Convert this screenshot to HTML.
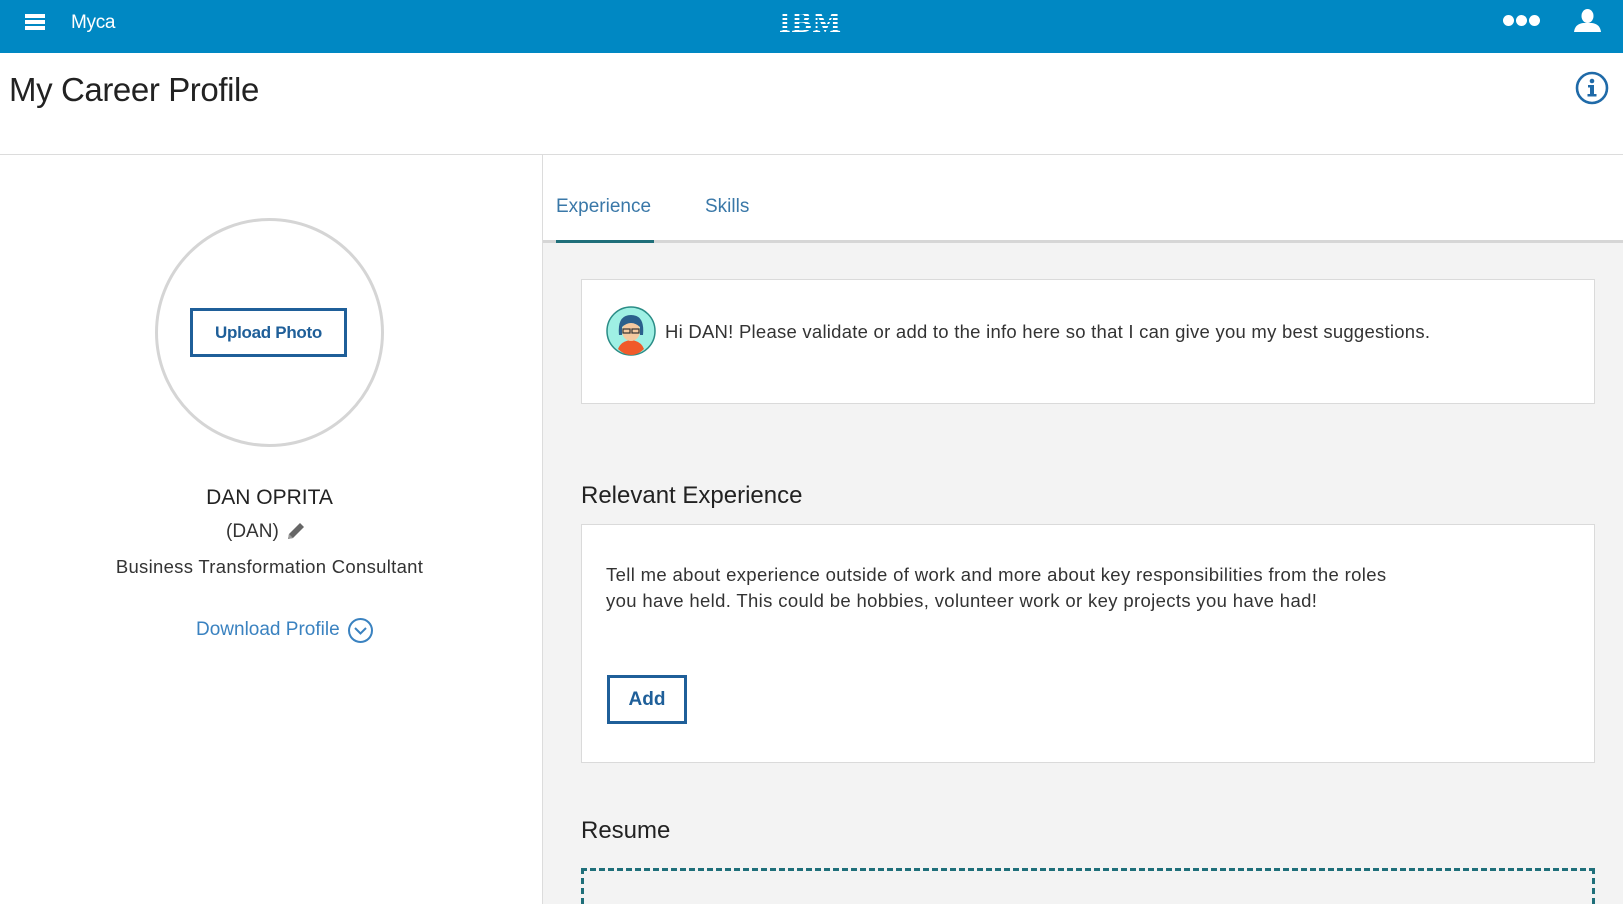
<!DOCTYPE html>
<html><head><meta charset="utf-8"><style>
*{margin:0;padding:0;box-sizing:border-box}
html,body{width:1623px;height:904px;overflow:hidden}
body{font-family:"Liberation Sans",Arial,sans-serif;background:#fff;color:#222}
#wrap{position:relative;width:1623px;height:904px;overflow:hidden}
.abs{position:absolute}
#hdr{left:0;top:0;width:1623px;height:53px;background:#0088c3}
.card{background:#fff;border:1px solid #dadada;position:absolute}
</style></head><body><div id="wrap">
<div id="hdr" class="abs">
  <div class="abs" style="left:25px;top:14px;width:20px;height:4px;background:#fff"></div>
  <div class="abs" style="left:25px;top:20px;width:20px;height:4px;background:#fff"></div>
  <div class="abs" style="left:25px;top:26px;width:20px;height:4px;background:#fff"></div>
  <div class="abs" style="left:71px;top:12px;color:#fff;font-size:19px;letter-spacing:-0.3px">Myca</div>
  <div class="abs" style="left:779px;top:6px;color:#fff;font-size:30px;font-weight:bold;font-family:'Liberation Serif',serif;letter-spacing:1px">IBM</div>
  <div class="abs" style="left:775px;top:12px;width:80px;height:30px;background:repeating-linear-gradient(#0088c3 0 2px,transparent 2px 4px)"></div>
  <div class="abs" style="left:1503px;top:15px;width:11px;height:11px;border-radius:50%;background:#fff"></div>
  <div class="abs" style="left:1516px;top:15px;width:11px;height:11px;border-radius:50%;background:#fff"></div>
  <div class="abs" style="left:1529px;top:15px;width:11px;height:11px;border-radius:50%;background:#fff"></div>
  <svg class="abs" style="left:1574px;top:9px" width="27" height="23" viewBox="0 0 27 23"><ellipse cx="13.5" cy="7" rx="6" ry="7" fill="#fff"/><path d="M0 23 Q1 15 9 14 L18 14 Q26 15 27 23Z" fill="#fff"/></svg>
</div>
<div class="abs" style="left:9px;top:71px;font-size:33px;color:#222;letter-spacing:-0.4px">My Career Profile</div>
<svg class="abs" style="left:1575px;top:71px" width="34" height="34" viewBox="0 0 34 34"><circle cx="17" cy="17" r="15" fill="none" stroke="#1f6aa8" stroke-width="2.6"/><circle cx="17" cy="10" r="2.3" fill="#1f6aa8"/><path d="M13 14h6v9h2.5v2.5h-9V23H15v-6.5h-2z" fill="#1f6aa8"/></svg>
<div class="abs" style="left:0;top:154px;width:1623px;height:1px;background:#dcdcdc"></div>
<div class="abs" style="left:542px;top:155px;width:1081px;height:749px;background:#f3f3f3"></div>
<div class="abs" style="left:543px;top:155px;width:1080px;height:86px;background:#fff"></div>
<div class="abs" style="left:542px;top:155px;width:1px;height:749px;background:#dcdcdc"></div>
<div class="abs" style="left:543px;top:240px;width:1080px;height:3px;background:#d6d6d6"></div>
<div class="abs" style="left:556px;top:240px;width:98px;height:3px;background:#1f6f7a"></div>
<div class="abs" style="left:556px;top:196px;font-size:19px;color:#3a78a8">Experience</div>
<div class="abs" style="left:705px;top:196px;font-size:19px;color:#3a78a8">Skills</div>
<div class="abs" style="left:155px;top:218px;width:229px;height:229px;border-radius:50%;border:3px solid #d5d5d5"></div>
<div class="abs" style="left:190px;top:308px;width:157px;height:49px;border:3px solid #1f5f99;color:#1f5f99;font-size:17px;font-weight:bold;text-align:center;line-height:43px;letter-spacing:-0.3px">Upload Photo</div>
<div class="abs" style="left:0;top:486px;width:539px;text-align:center;font-size:21px;color:#222">DAN OPRITA</div>
<div class="abs" style="left:226px;top:521px;font-size:19px;color:#333">(DAN)</div>
<svg class="abs" style="left:285px;top:520px" width="22" height="22" viewBox="0 0 22 22"><path d="M3 19l1-5L15 3l4 4L8 18z" fill="#666"/><path d="M3 19l1-5 4 4z" fill="#999"/></svg>
<div class="abs" style="left:0;top:556px;width:539px;text-align:center;font-size:18.5px;color:#333;letter-spacing:0.3px">Business Transformation Consultant</div>
<div class="abs" style="left:196px;top:619px;font-size:19px;color:#3a82c0">Download Profile</div>
<svg class="abs" style="left:347px;top:617px" width="27" height="27" viewBox="0 0 27 27"><circle cx="13.5" cy="13.5" r="11.5" fill="none" stroke="#3a82c0" stroke-width="2"/><path d="M8 11l5.5 5.5L19 11" fill="none" stroke="#3a82c0" stroke-width="2"/></svg>
<div class="card" style="left:581px;top:279px;width:1014px;height:125px"></div>
<svg class="abs" style="left:605px;top:305px" width="52" height="52" viewBox="0 0 52 52"><circle cx="26" cy="26" r="24" fill="#9ff0e4" stroke="#2a8c86" stroke-width="1.5"/><path d="M13 44Q16 36 26 35Q36 36 39 44Q33 50 26 50Q19 50 13 44Z" fill="#f05a2a"/><path d="M14 30Q12 10 26 10Q40 10 38 30L35 30L35 20L17 20L17 30Z" fill="#2a5f8c"/><ellipse cx="26" cy="26" rx="9" ry="10" fill="#f5c9a0"/><path d="M17 22Q26 14 35 22L35 17Q26 10 17 17Z" fill="#2a5f8c"/><rect x="18" y="24" width="7" height="4" fill="none" stroke="#333" stroke-width="1.2"/><rect x="27" y="24" width="7" height="4" fill="none" stroke="#333" stroke-width="1.2"/></svg>
<div class="abs" style="left:665px;top:321px;font-size:18.5px;color:#333;letter-spacing:0.25px">Hi DAN! Please validate or add to the info here so that I can give you my best suggestions.</div>
<div class="abs" style="left:581px;top:482px;font-size:24px;color:#222">Relevant Experience</div>
<div class="card" style="left:581px;top:524px;width:1014px;height:239px"></div>
<div class="abs" style="left:606px;top:562px;font-size:18.5px;color:#333;line-height:26px;width:900px;letter-spacing:0.35px">Tell me about experience outside of work and more about key responsibilities from the roles<br>you have held. This could be hobbies, volunteer work or key projects you have had!</div>
<div class="abs" style="left:607px;top:675px;width:80px;height:49px;border:3px solid #1f5f99;color:#1f5f99;font-size:19px;font-weight:bold;text-align:center;line-height:43px;background:#fff">Add</div>
<div class="abs" style="left:581px;top:817px;font-size:24px;color:#222">Resume</div>
<div class="abs" style="left:581px;top:868px;width:1014px;height:36px;border:3px dashed #1f6f7a;border-bottom:none"></div>
</div></body></html>
